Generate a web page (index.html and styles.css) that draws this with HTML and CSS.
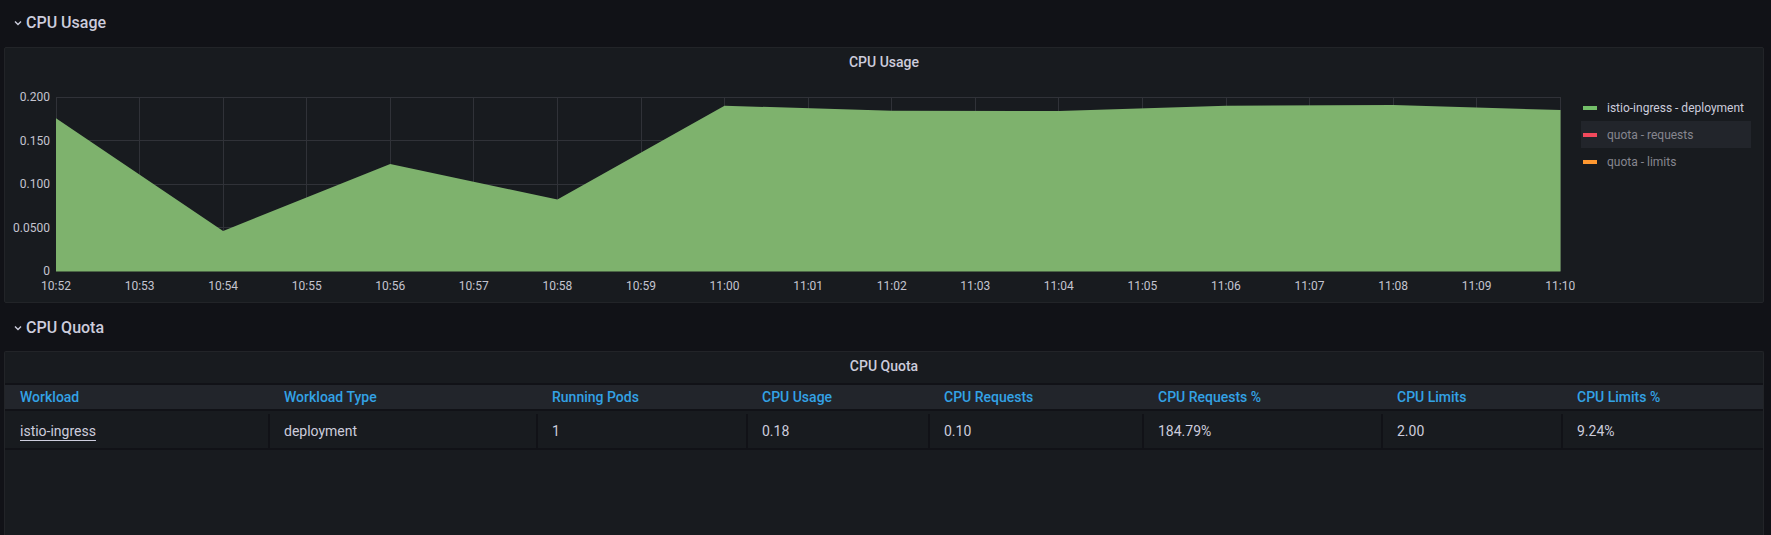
FILE: index.html
```html
<!DOCTYPE html>
<html>
<head>
<meta charset="utf-8">
<link rel="stylesheet" href="styles.css">
</head>
<body>
<div class="dashboard">
  <div class="row-header">
    <svg class="chevron" width="8" height="6" viewBox="0 0 8 6"><polyline points="1,1.5 4,4.5 7,1.5" fill="none" stroke="#ccccdc" stroke-width="1.4"/></svg>
    <span class="row-title">CPU Usage</span>
  </div>
  <div class="panel panel-graph">
    <div class="panel-title">CPU Usage</div>
    <div class="graph-body">
      <svg class="graph" width="1570" height="222" viewBox="5 76 1570 222">
        <g class="grid" stroke="#303238" stroke-width="1">
          <line x1="56" y1="97.5" x2="1561" y2="97.5"/>
          <line x1="56" y1="140.5" x2="1561" y2="140.5"/>
          <line x1="56" y1="184.5" x2="1561" y2="184.5"/>
          <line x1="56" y1="227.5" x2="1561" y2="227.5"/>
          <line x1="56.5" y1="97" x2="56.5" y2="271"/>
          <line x1="139.5" y1="97" x2="139.5" y2="271"/>
          <line x1="223.5" y1="97" x2="223.5" y2="271"/>
          <line x1="306.5" y1="97" x2="306.5" y2="271"/>
          <line x1="390.5" y1="97" x2="390.5" y2="271"/>
          <line x1="473.5" y1="97" x2="473.5" y2="271"/>
          <line x1="557.5" y1="97" x2="557.5" y2="271"/>
          <line x1="641.5" y1="97" x2="641.5" y2="271"/>
          <line x1="724.5" y1="97" x2="724.5" y2="271"/>
          <line x1="808.5" y1="97" x2="808.5" y2="271"/>
          <line x1="891.5" y1="97" x2="891.5" y2="271"/>
          <line x1="975.5" y1="97" x2="975.5" y2="271"/>
          <line x1="1058.5" y1="97" x2="1058.5" y2="271"/>
          <line x1="1142.5" y1="97" x2="1142.5" y2="271"/>
          <line x1="1226.5" y1="97" x2="1226.5" y2="271"/>
          <line x1="1309.5" y1="97" x2="1309.5" y2="271"/>
          <line x1="1393.5" y1="97" x2="1393.5" y2="271"/>
          <line x1="1476.5" y1="97" x2="1476.5" y2="271"/>
          <line x1="1560.5" y1="97" x2="1560.5" y2="271"/>
        </g>
        <polygon fill="#7eb26d" points="56,271.5 56,118.3 223.1,231 390.2,164 557.4,199.5 724.5,105.7 891.7,110.7 1058.8,111 1225.9,105.7 1393.1,105 1560.5,110 1560.5,271.5"/>
        <g class="ylabels" text-anchor="end">
          <text x="50" y="97">0.200</text>
          <text x="50" y="140.5">0.150</text>
          <text x="50" y="184">0.100</text>
          <text x="50" y="227.5">0.0500</text>
          <text x="50" y="271">0</text>
        </g>
        <g class="xlabels" text-anchor="middle">
          <text x="56" y="286">10:52</text>
          <text x="139.6" y="286">10:53</text>
          <text x="223.1" y="286">10:54</text>
          <text x="306.7" y="286">10:55</text>
          <text x="390.3" y="286">10:56</text>
          <text x="473.8" y="286">10:57</text>
          <text x="557.4" y="286">10:58</text>
          <text x="641" y="286">10:59</text>
          <text x="724.5" y="286">11:00</text>
          <text x="808.1" y="286">11:01</text>
          <text x="891.7" y="286">11:02</text>
          <text x="975.2" y="286">11:03</text>
          <text x="1058.8" y="286">11:04</text>
          <text x="1142.4" y="286">11:05</text>
          <text x="1225.9" y="286">11:06</text>
          <text x="1309.5" y="286">11:07</text>
          <text x="1393.1" y="286">11:08</text>
          <text x="1476.6" y="286">11:09</text>
          <text x="1560.2" y="286">11:10</text>
        </g>
      </svg>
      <div class="legend">
        <div class="legend-item">
          <span class="swatch swatch-green"></span>
          <span class="legend-label">istio-ingress - deployment</span>
        </div>
        <div class="legend-item legend-hover legend-hidden">
          <span class="swatch swatch-red"></span>
          <span class="legend-label">quota - requests</span>
        </div>
        <div class="legend-item legend-hidden">
          <span class="swatch swatch-orange"></span>
          <span class="legend-label">quota - limits</span>
        </div>
      </div>
    </div>
  </div>

  <div class="row-header row-header-second">
    <svg class="chevron" width="8" height="6" viewBox="0 0 8 6"><polyline points="1,1.5 4,4.5 7,1.5" fill="none" stroke="#ccccdc" stroke-width="1.4"/></svg>
    <span class="row-title">CPU Quota</span>
  </div>
  <div class="panel panel-table">
    <div class="panel-title">CPU Quota</div>
    <div class="table">
      <div class="thead">
        <div class="th">Workload</div>
        <div class="th">Workload Type</div>
        <div class="th">Running Pods</div>
        <div class="th">CPU Usage</div>
        <div class="th">CPU Requests</div>
        <div class="th">CPU Requests %</div>
        <div class="th">CPU Limits</div>
        <div class="th">CPU Limits %</div>
      </div>
      <div class="trow">
        <div class="td"><a class="cell-link">istio-ingress</a></div>
        <div class="td">deployment</div>
        <div class="td">1</div>
        <div class="td">0.18</div>
        <div class="td">0.10</div>
        <div class="td">184.79%</div>
        <div class="td">2.00</div>
        <div class="td">9.24%</div>
      </div>
    </div>
  </div>
</div>
</body>
</html>
```

FILE: styles.css
```css
html, body {
  margin: 0;
  padding: 0;
  height: 535px;
  overflow: hidden;
  background: #111217;
  font-family: Roboto, "Liberation Sans", sans-serif;
  color: #ccccdc;
}

.dashboard {
  padding: 0 7px 0 4px;
}

.row-header {
  height: 47px;
  padding: 0 0 3px 10px;
  box-sizing: border-box;
  display: flex;
  align-items: center;
  gap: 4px;
}

.row-header-second {
  padding-bottom: 1px;
}

.chevron {
  display: block;
  margin-top: 2px;
}

.row-title {
  font-size: 16px;
  font-weight: 500;
  color: #ccccdc;
}

.panel {
  background: #181b1f;
  border: 1px solid #222428;
  border-radius: 2px;
  box-sizing: border-box;
}

.panel-graph {
  height: 256px;
  margin-bottom: 1px;
}

.panel-table {
  height: 184px;
  border-bottom: none;
  border-radius: 2px 2px 0 0;
}

.panel-title {
  height: 28px;
  line-height: 28px;
  text-align: center;
  font-size: 14px;
  font-weight: 500;
  color: #ccccdc;
}

.graph-body {
  display: flex;
  align-items: flex-start;
}

.graph {
  display: block;
  flex: 0 0 auto;
}

.graph text {
  font-family: Roboto, "Liberation Sans", sans-serif;
  font-size: 12px;
  fill: #c4c4cf;
  dominant-baseline: central;
}

.legend {
  margin-left: 6px;
  margin-top: 18px;
  width: 170px;
  display: flex;
  flex-direction: column;
}

.legend-item {
  height: 27px;
  display: flex;
  align-items: center;
  padding-left: 2px;
  gap: 10px;
  font-size: 12px;
  color: #ccccdc;
}

.legend-hidden {
  color: #86868f;
}

.legend-hover {
  background: #22252b;
}

.swatch {
  width: 14px;
  height: 4px;
  display: block;
}

.swatch-green { background: #73bf69; }
.swatch-red { background: #f2495c; }
.swatch-orange { background: #ff9830; }

.table {
  margin-top: 3px;
}

.thead,
.trow {
  display: grid;
  grid-template-columns: 263px 268px 210px 182px 214px 239px 180px 202px;
}

.thead {
  background: #22252b;
  border-top: 2px solid #111217;
  border-bottom: 2px solid #111217;
  height: 28px;
  box-sizing: border-box;
}

.th {
  color: #33a2e5;
  font-size: 14px;
  font-weight: 500;
  line-height: 25px;
  padding-left: 16px;
}

.th:first-child {
  padding-left: 15px;
}

.trow {
  padding-top: 3px;
  border-bottom: 2px solid #111217;
}

.td {
  height: 34px;
  line-height: 34px;
  font-size: 14px;
  color: #ccccdc;
  padding-left: 14px;
  border-left: 2px solid #111217;
}

.td:first-child {
  padding-left: 15px;
  border-left: none;
}

.cell-link {
  color: #ccccdc;
  text-decoration: underline;
  text-underline-offset: 4px;
  text-decoration-thickness: 1px;
}
```
